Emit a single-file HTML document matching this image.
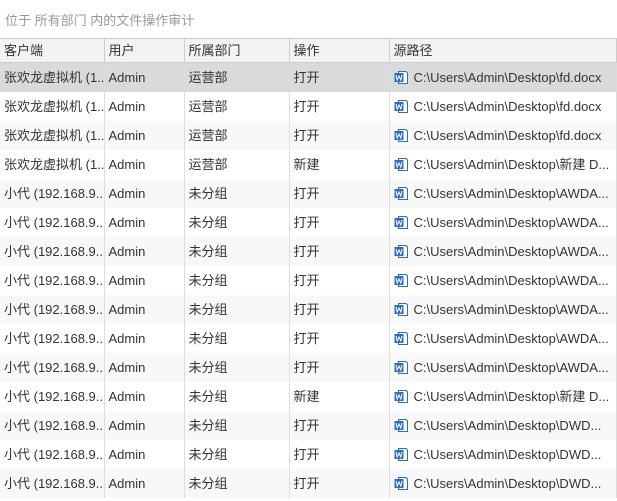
<!DOCTYPE html><html><head><style>
body{margin:0;width:617px;height:501px;overflow:hidden;background:#fff;font-family:"Liberation Sans","Noto Sans CJK SC",sans-serif;font-size:13px;color:#333}
.t{position:absolute;left:5px;top:10px;color:#999;font-size:13px}
table{position:absolute;left:0;top:38px;border-collapse:collapse;table-layout:fixed;width:617px}
td,th{height:29px;line-height:29px;padding:0 0 0 4px;white-space:nowrap;overflow:hidden;border-right:1px solid #ddd;text-align:left;font-weight:normal;vertical-align:middle;box-sizing:border-box}
th{height:24px;line-height:22px;background:#f3f3f3;border:1px solid #ccc;border-left:none;color:#333}
tr.s td{background:#dadada}
tr.a td{background:#f8f8f8}
svg{vertical-align:-3px;margin-right:5px}
</style></head><body>
<div class="t">位于 所有部门 内的文件操作审计</div>
<svg width="0" height="0" style="position:absolute"><defs><g id="w"><path d="M4.5 1.5h7.5l1.5 1.5v10.5h-9z" fill="#fff" stroke="#2b6cc4"/><rect x="0.5" y="3" width="9" height="9" fill="#2b6cc4"/><path d="M2 5l1.2 5 1.8-4 1.8 4 1.2-5" fill="none" stroke="#fff" stroke-width="1"/></g></defs></svg>
<table>
<colgroup><col style="width:104px"><col style="width:80px"><col style="width:105px"><col style="width:100px"><col></colgroup>
<tr><th>客户端</th><th>用户</th><th>所属部门</th><th>操作</th><th>源路径</th></tr>
<tr class="s"><td>张欢龙虚拟机 (1...</td><td>Admin</td><td>运营部</td><td>打开</td><td><svg width="15" height="15"><use href="#w"/></svg>C:\Users\Admin\Desktop\fd.docx</td></tr>
<tr><td>张欢龙虚拟机 (1...</td><td>Admin</td><td>运营部</td><td>打开</td><td><svg width="15" height="15"><use href="#w"/></svg>C:\Users\Admin\Desktop\fd.docx</td></tr>
<tr class="a"><td>张欢龙虚拟机 (1...</td><td>Admin</td><td>运营部</td><td>打开</td><td><svg width="15" height="15"><use href="#w"/></svg>C:\Users\Admin\Desktop\fd.docx</td></tr>
<tr><td>张欢龙虚拟机 (1...</td><td>Admin</td><td>运营部</td><td>新建</td><td><svg width="15" height="15"><use href="#w"/></svg>C:\Users\Admin\Desktop\新建 D...</td></tr>
<tr class="a"><td>小代 (192.168.9...</td><td>Admin</td><td>未分组</td><td>打开</td><td><svg width="15" height="15"><use href="#w"/></svg>C:\Users\Admin\Desktop\AWDA...</td></tr>
<tr><td>小代 (192.168.9...</td><td>Admin</td><td>未分组</td><td>打开</td><td><svg width="15" height="15"><use href="#w"/></svg>C:\Users\Admin\Desktop\AWDA...</td></tr>
<tr class="a"><td>小代 (192.168.9...</td><td>Admin</td><td>未分组</td><td>打开</td><td><svg width="15" height="15"><use href="#w"/></svg>C:\Users\Admin\Desktop\AWDA...</td></tr>
<tr><td>小代 (192.168.9...</td><td>Admin</td><td>未分组</td><td>打开</td><td><svg width="15" height="15"><use href="#w"/></svg>C:\Users\Admin\Desktop\AWDA...</td></tr>
<tr class="a"><td>小代 (192.168.9...</td><td>Admin</td><td>未分组</td><td>打开</td><td><svg width="15" height="15"><use href="#w"/></svg>C:\Users\Admin\Desktop\AWDA...</td></tr>
<tr><td>小代 (192.168.9...</td><td>Admin</td><td>未分组</td><td>打开</td><td><svg width="15" height="15"><use href="#w"/></svg>C:\Users\Admin\Desktop\AWDA...</td></tr>
<tr class="a"><td>小代 (192.168.9...</td><td>Admin</td><td>未分组</td><td>打开</td><td><svg width="15" height="15"><use href="#w"/></svg>C:\Users\Admin\Desktop\AWDA...</td></tr>
<tr><td>小代 (192.168.9...</td><td>Admin</td><td>未分组</td><td>新建</td><td><svg width="15" height="15"><use href="#w"/></svg>C:\Users\Admin\Desktop\新建 D...</td></tr>
<tr class="a"><td>小代 (192.168.9...</td><td>Admin</td><td>未分组</td><td>打开</td><td><svg width="15" height="15"><use href="#w"/></svg>C:\Users\Admin\Desktop\DWD...</td></tr>
<tr><td>小代 (192.168.9...</td><td>Admin</td><td>未分组</td><td>打开</td><td><svg width="15" height="15"><use href="#w"/></svg>C:\Users\Admin\Desktop\DWD...</td></tr>
<tr class="a"><td>小代 (192.168.9...</td><td>Admin</td><td>未分组</td><td>打开</td><td><svg width="15" height="15"><use href="#w"/></svg>C:\Users\Admin\Desktop\DWD...</td></tr>
</table>
</body></html>
